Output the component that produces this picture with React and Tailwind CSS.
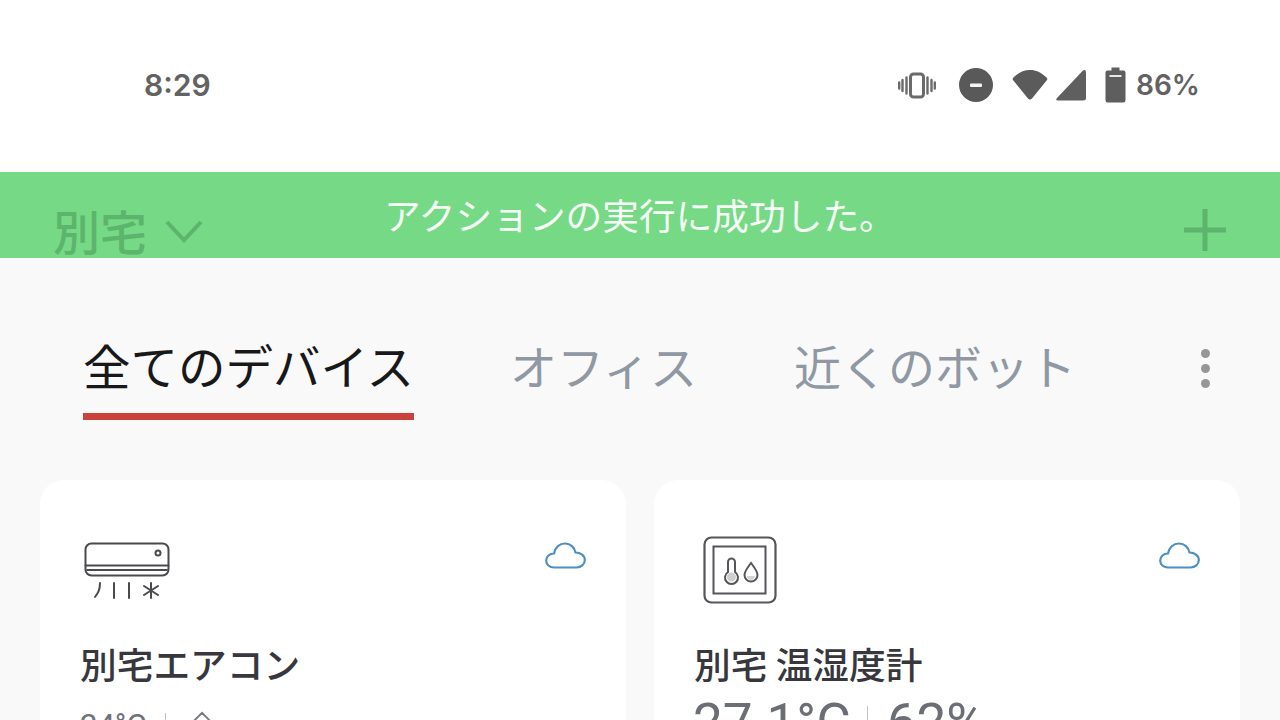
function Vibrate() {
  return (
    <svg width="38" height="30" viewBox="0 0 38 30" fill="none" stroke="#6b6b6b" strokeLinecap="round">
      <rect x="12.500" y="4" width="13" height="23" rx="3" strokeWidth="3" />
      <path d="M8.500 7.500v16M4.500 10v11M1.200 12.500v6M29.500 7.500v16M33.500 10v11M36.800 12.500v6" strokeWidth="2.400" />
    </svg>
  );
}
function Dnd() {
  return (
    <svg width="34" height="34" viewBox="0 0 34 34">
      <circle cx="17" cy="17" r="17" fill="#595959" />
      <rect x="11" y="15.500" width="12" height="3.400" rx="1" fill="#f4f4f4" />
    </svg>
  );
}
function Wifi() {
  return (
    <svg width="36" height="32" viewBox="0 0 36 32">
      <path d="M1 11Q0 9.500 2 8C7 3.500 12 1 18 1S29 3.500 34 8Q36 9.500 35 11L20 29.500Q18 31.500 16 29.500Z" fill="#5b5b5b" />
    </svg>
  );
}
function Signal() {
  return (
    <svg width="32" height="32" viewBox="0 0 32 32">
      <path d="M28 1.500Q31 0 31 3.500V29Q31 31.500 28 31.500H3Q0 31.500 2 29Z" fill="#5f5f5f" />
    </svg>
  );
}
function Battery() {
  return (
    <svg width="21" height="36" viewBox="0 0 21 36">
      <path d="M6.500 0.500h8V3.500h4Q20.500 3.500 20.500 5.500V33Q20.500 35.500 18.500 35.500H2.500Q0.500 35.500 0.500 33V5.500Q0.500 3.500 2.500 3.500h4Z" fill="#5e5e5e" />
      <rect x="4.500" y="8" width="12" height="2" fill="#e8e8e8" />
    </svg>
  );
}
function Cloud() {
  return (
    <svg width="41" height="27" viewBox="0 0 41 27" fill="none" stroke="#4c8fc4" strokeWidth="2.200" strokeLinejoin="round">
      <path d="M9 25.500C4.500 25.500 1.200 22.500 1.200 18.500C1.200 14.500 4.500 11.500 9 11.500C10 5.500 14.500 1.500 20 1.500C25.500 1.500 29.500 5.500 30.500 10.500C35.500 10.500 39.800 13.800 39.800 18C39.800 22.500 36 25.500 31.500 25.500Z" />
    </svg>
  );
}
function AirCon() {
  return (
    <svg width="88" height="60" viewBox="0 0 88 60" fill="none" stroke="#4a4a4e" strokeWidth="2" strokeLinecap="round">
      <rect x="1.500" y="1.500" width="83" height="32" rx="6" />
      <path d="M1.500 23.500H84.500" />
      <path d="M3 28H83" strokeWidth="1.800" />
      <circle cx="74" cy="11" r="2.500" />
      <path d="M16 41C16 48 14 51 11 55" />
      <path d="M30 41V56" />
      <path d="M45 41V56" />
      <path d="M67 41V56M60 44L74 53M74 44L60 53" />
    </svg>
  );
}
function Meter() {
  return (
    <svg width="74" height="68" viewBox="0 0 74 68" fill="none" stroke="#55555a">
      <rect x="1.500" y="1.500" width="71" height="65" rx="7" strokeWidth="2.200" />
      <rect x="10.500" y="10.500" width="52" height="47" strokeWidth="2" />
      <path d="M25 26a3.500 3.500 0 0 1 7 0V36a6.500 6.500 0 1 1-7 0Z" strokeWidth="2" fill="#fff" />
      <circle cx="28.500" cy="41" r="4.500" fill="#cfcfcf" stroke="none" />
      <path d="M48 27C51 31 54.500 35 54.500 39a6.500 6.500 0 0 1-13 0C41.500 35 45 31 48 27Z" strokeWidth="2" fill="#fff" />
      <path d="M44 40a4 4 0 0 0 8 0Z" fill="#d5d5d5" stroke="none" />
    </svg>
  );
}
function Card({ icon, title, children, iconPad }) {
  return (
    <div className="flex-1 h-[300px] bg-white rounded-[24px] flex flex-col">
      <div className={"flex justify-between items-start pt-[56px] h-[160px] " + iconPad}>
        {icon}
        <div className="mt-[6px]"><Cloud /></div>
      </div>
      <div className="pl-[40px] text-[36.700px] font-medium leading-[46px] text-[#37373d]">{title}</div>
      {children}
    </div>
  );
}
export default function App() {
  return (
    <div
      className="w-[1280px] h-[720px] overflow-hidden bg-[#f9f9f9] flex flex-col"
      style={{ fontFamily: '"Noto Sans CJK JP", "Noto Sans", sans-serif' }}
    >
      <div className="h-[172px] shrink-0 bg-white flex justify-between items-start pl-[144px] pr-[80px] pt-[67px]">
        <span className="text-[30px] leading-[36px] font-semibold text-[#626262]" style={{ fontFamily: 'Inter, sans-serif' }}>8:29</span>
        <div className="flex items-center h-[36px]">
          <Vibrate />
          <div className="ml-[23px]"><Dnd /></div>
          <div className="ml-[19px]"><Wifi /></div>
          <div className="ml-[7px]"><Signal /></div>
          <div className="ml-[18px]"><Battery /></div>
          <span className="ml-[10px] text-[28px] leading-[36px] font-semibold text-[#626262]" style={{ fontFamily: 'Inter, sans-serif' }}>86%</span>
        </div>
      </div>
      <div className="relative h-[86px] shrink-0 bg-[#76d985] flex justify-between items-start pl-[53px] pr-[54px] pt-[24px]">
        <div className="flex items-center gap-[18px]">
          <span className="text-[47px] font-medium leading-[68px] text-[#5cb46d]">別宅</span>
          <svg width="38" height="24" viewBox="0 0 38 24" fill="none" stroke="#5cb46d" strokeWidth="4" className="mt-[1px]">
            <path d="M2 3L19 21L36 3" />
          </svg>
        </div>
        <svg width="42" height="42" viewBox="0 0 42 42" stroke="#5cb46d" strokeWidth="5" className="mt-[13px]">
          <path d="M21 0V42M0 21H42" />
        </svg>
        <div className="absolute inset-x-0 top-[16px] pl-[384px] text-[36.700px] leading-[52px] text-[#f6fdf7] whitespace-nowrap">
          アクションの実行に成功した。
        </div>
      </div>
      <div className="flex items-start pl-[83px] pr-[70px] pt-[72px] h-[222px] shrink-0">
        <div className="flex flex-col w-[331px]">
          <span className="text-[47.500px] leading-[70px] text-[#18181a] whitespace-nowrap">全てのデバイス</span>
          <div className="h-[7px] mt-[13px] bg-[#cb423d]" />
        </div>
        <span className="ml-[96px] text-[47px] leading-[70px] text-[#8f98a3] whitespace-nowrap">オフィス</span>
        <span className="ml-[97px] text-[47px] leading-[70px] text-[#8f98a3] whitespace-nowrap">近くのボット</span>
        <div className="ml-auto mt-[19px] flex flex-col gap-[6px]">
          <div className="w-[9px] h-[9px] rounded-full bg-[#969696]" />
          <div className="w-[9px] h-[9px] rounded-full bg-[#969696]" />
          <div className="w-[9px] h-[9px] rounded-full bg-[#969696]" />
        </div>
      </div>
      <div className="flex gap-[28px] px-[40px] shrink-0">
        <Card title="別宅エアコン" icon={<div className="pt-[6px]"><AirCon /></div>} iconPad="pl-[44px] pr-[40px]">
          <div className="pl-[40px] mt-[20px] flex items-center text-[31px] leading-[40px] text-[#6f7278]">
            <span style={{ fontFamily: 'Roboto, sans-serif' }}>24°C</span>
            <div className="w-px h-[26px] bg-[#c4c4c4] ml-[18px] mr-[25px]" />
            <svg width="22" height="22" viewBox="0 0 24 24" fill="none" stroke="#77797e" strokeWidth="2" className="mb-[8px]"><path d="M2 12L12 2L22 12M5 10V22H19V10" /></svg>
          </div>
        </Card>
        <Card title="別宅 温湿度計" icon={<Meter />} iconPad="pl-[49px] pr-[40px]">
          <div className="pl-[39px] mt-[7px] flex items-center text-[53px] leading-[60px] text-[#6b6e74]" style={{ fontFamily: 'Roboto, sans-serif' }}>
            <span>27.1°C</span>
            <div className="w-px h-[34px] bg-[#c4c4c4] ml-[16px] mr-[19px]" />
            <span>62%</span>
          </div>
        </Card>
      </div>
    </div>
  );
}
